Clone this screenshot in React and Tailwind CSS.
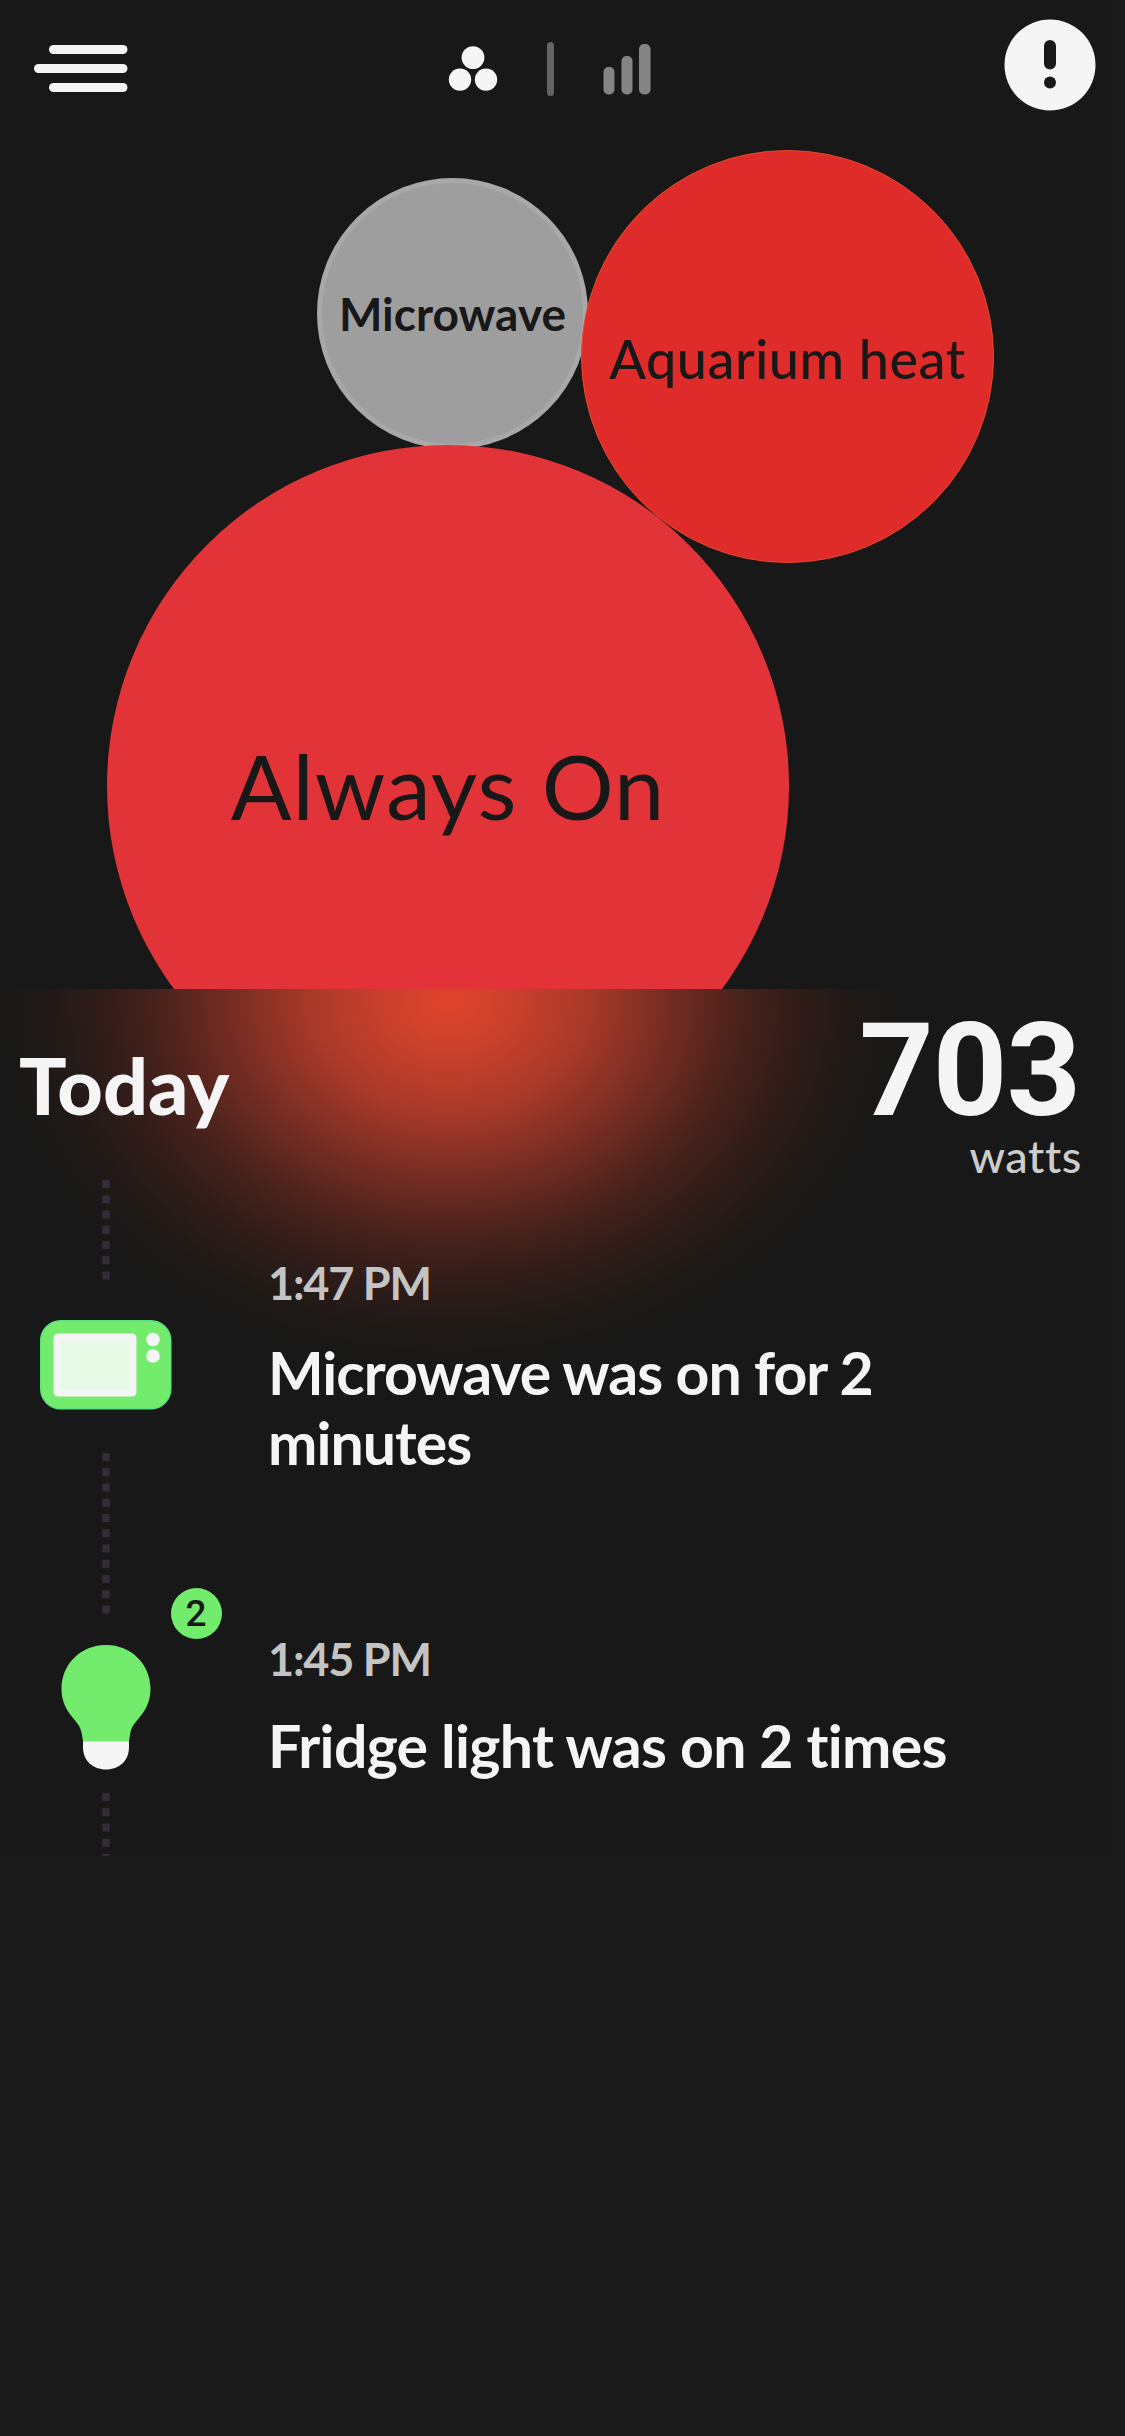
import React from "react";

function MenuIcon() {
  return (
    <svg width="94" height="48" viewBox="0 0 94 48" fill="#f5f5f5">
      <rect x="15" y="0" width="78.5" height="9" rx="4.5" />
      <rect x="0" y="19" width="93.5" height="9" rx="4.5" />
      <rect x="15" y="38" width="78.5" height="9" rx="4.5" />
    </svg>
  );
}

function BubblesIcon() {
  return (
    <svg width="50" height="46" viewBox="0 0 50 46" fill="#f5f5f5">
      <circle cx="25" cy="11.6" r="11.4" />
      <circle cx="12" cy="33.6" r="11.2" />
      <circle cx="38" cy="33.6" r="11.2" />
    </svg>
  );
}

function BarsIcon() {
  return (
    <svg width="50" height="52" viewBox="0 0 50 52" fill="#848484">
      <rect x="1.5" y="23" width="11" height="27.5" rx="5" />
      <rect x="19.5" y="12" width="11" height="38.5" rx="5" />
      <rect x="37" y="0" width="11.5" height="50.5" rx="5" />
    </svg>
  );
}

function AlertIcon() {
  return (
    <svg width="92" height="92" viewBox="0 0 92 92">
      <circle cx="46" cy="46" r="45.5" fill="#f5f5f5" />
      <rect x="40" y="21" width="12" height="29.5" rx="6" fill="#181818" />
      <circle cx="46" cy="63.5" r="6" fill="#181818" />
    </svg>
  );
}

function MicrowaveIcon() {
  return (
    <svg width="132" height="90" viewBox="0 0 132 90">
      <rect x="0.75" y="0.75" width="130" height="88" rx="20" fill="#73ec6d" stroke="#58e683" strokeWidth="1.5" />
      <rect x="17" y="17" width="76" height="56" rx="1" fill="#e7fae6" stroke="#f5f5f5" strokeWidth="7" />
      <circle cx="113" cy="19.5" r="6.8" fill="#f5f5f5" />
      <circle cx="113" cy="36" r="6.8" fill="#f5f5f5" />
    </svg>
  );
}

function BulbIcon() {
  return (
    <svg width="92" height="126" viewBox="0 0 92 126">
      <path
        d="M46 1C21 1 1.5 20 1.5 45C1.5 58 7 67 13 74C19 81 21 84 22 91L23.5 100H68.5L70 91C71 84 73 81 79 74C85 67 90.5 58 90.5 45C90.5 20 71 1 46 1Z"
        fill="#73ec6d"
      />
      <path d="M23 97.500H69V103C69 117 59 125.500 46 125.500S23 117 23 103Z" fill="#f5f5f5" />
    </svg>
  );
}

function Dots({ className }) {
  return (
    <svg className={className}>
      <line x1="4" y1="0" x2="4" y2="200" stroke="#352c3b" strokeWidth="7.5" strokeDasharray="8 7.25" />
    </svg>
  );
}

export default function App() {
  return (
    <div className="h-[2436px] w-[1125px] overflow-hidden bg-[#1b1b1b] font-['Lato',sans-serif] text-[#f5f5f5] [font-variant-ligatures:none]">
      <main className="h-[1856px] w-[1112px] overflow-hidden bg-[#181818]">
        <header className="grid h-[128px] grid-cols-[1fr_auto_1fr] items-start pl-[34px] pr-4">
          <div className="mt-[45px]">
            <MenuIcon />
          </div>
          <nav className="flex items-start pr-[30px]">
            <div className="mt-[46px]">
              <BubblesIcon />
            </div>
            <div className="ml-[49px] mt-[42px] h-[54px] w-[7px] rounded-sm bg-[#636363]" />
            <div className="ml-[48px] mt-[44px]">
              <BarsIcon />
            </div>
          </nav>
          <div className="mt-[19px] justify-self-end">
            <AlertIcon />
          </div>
        </header>

        <section className="relative h-[861px] overflow-hidden text-[#181818]">
          <div className="absolute left-[317px] top-[50px] flex h-[271px] w-[271px] items-center justify-center rounded-full border-[5px] border-[#a8a8a8] bg-[#9e9e9e]">
            <span className="text-[46px] font-bold leading-none whitespace-nowrap">Microwave</span>
          </div>
          <div className="absolute left-[581px] top-[22px] flex h-[413px] w-[413px] items-center justify-center rounded-full border border-[#e24a26] bg-[#e02b2b]">
            <span className="pt-1 text-[54px] font-medium leading-none tracking-[0.5px] whitespace-nowrap">Aquarium heat</span>
          </div>
          <div className="absolute left-[107px] top-[317px] flex h-[682px] w-[682px] items-center justify-center rounded-full bg-[#e23438]">
            <span className="pb-0.5 text-[90px] leading-none tracking-[1.1px] whitespace-nowrap">Always On</span>
          </div>
        </section>

        <section className="h-[867px] overflow-hidden bg-[radial-gradient(ellipse_450px_365px_at_449px_12px,#e0442a_0%,#d1422c_10%,#ad3a2a_29%,#772d23_48%,#4a221c_64%,#2f1c19_78%,#1e1916_91%,#181818_100%)]">
          <div className="flex h-[189px] justify-between pl-[19px] pr-[30px] pt-[11px]">
            <h1 className="mt-[45px] text-[79px] font-black leading-none">Today</h1>
            <div className="flex flex-col items-end">
              <span className="mr-0.5 mt-[6px] font-['Roboto',sans-serif] text-[130px] font-bold leading-none tracking-[-1px]">703</span>
              <span className="-mt-[2px] text-[45px] font-medium leading-none tracking-[0.6px] text-[#cccccc]">watts</span>
            </div>
          </div>

          <div className="grid grid-cols-[211px_1fr]">
            <div className="flex flex-col items-center">
              <Dots className="mt-[2px] h-[100px] w-[8px]" />
              <div className="mt-[40px]">
                <MicrowaveIcon />
              </div>
              <Dots className="mt-[43px] h-[168px] w-[8px]" />
              <div className="relative mt-[23px]">
                <BulbIcon />
                <span className="absolute -top-[56px] left-[111px] flex h-[51px] w-[51px] items-center justify-center rounded-full bg-[#73ec6d] font-['Roboto',sans-serif] text-[37px] font-medium leading-none text-[#181818]">
                  2
                </span>
              </div>
              <Dots className="mt-[23px] h-[64px] w-[8px]" />
            </div>
            <div className="pl-[57px] pt-[83px]">
              <article>
                <p className="text-[45px] font-bold leading-none tracking-[-1.2px] text-[#c4c4c4]">1:47 PM</p>
                <h2 className="mt-[32px] w-[700px] text-[59px] font-bold leading-[70px] tracking-[-1px]">
                  Microwave was on for 2
                  <br />
                  minutes
                </h2>
              </article>
              <article className="mt-[159px]">
                <p className="text-[45px] font-bold leading-none tracking-[-1.2px] text-[#c4c4c4]">1:45 PM</p>
                <h2 className="mt-[29px] text-[59px] font-bold leading-[70px] tracking-[-0.7px] whitespace-nowrap">
                  Fridge light was on 2 times
                </h2>
              </article>
            </div>
          </div>
        </section>
      </main>
    </div>
  );
}
